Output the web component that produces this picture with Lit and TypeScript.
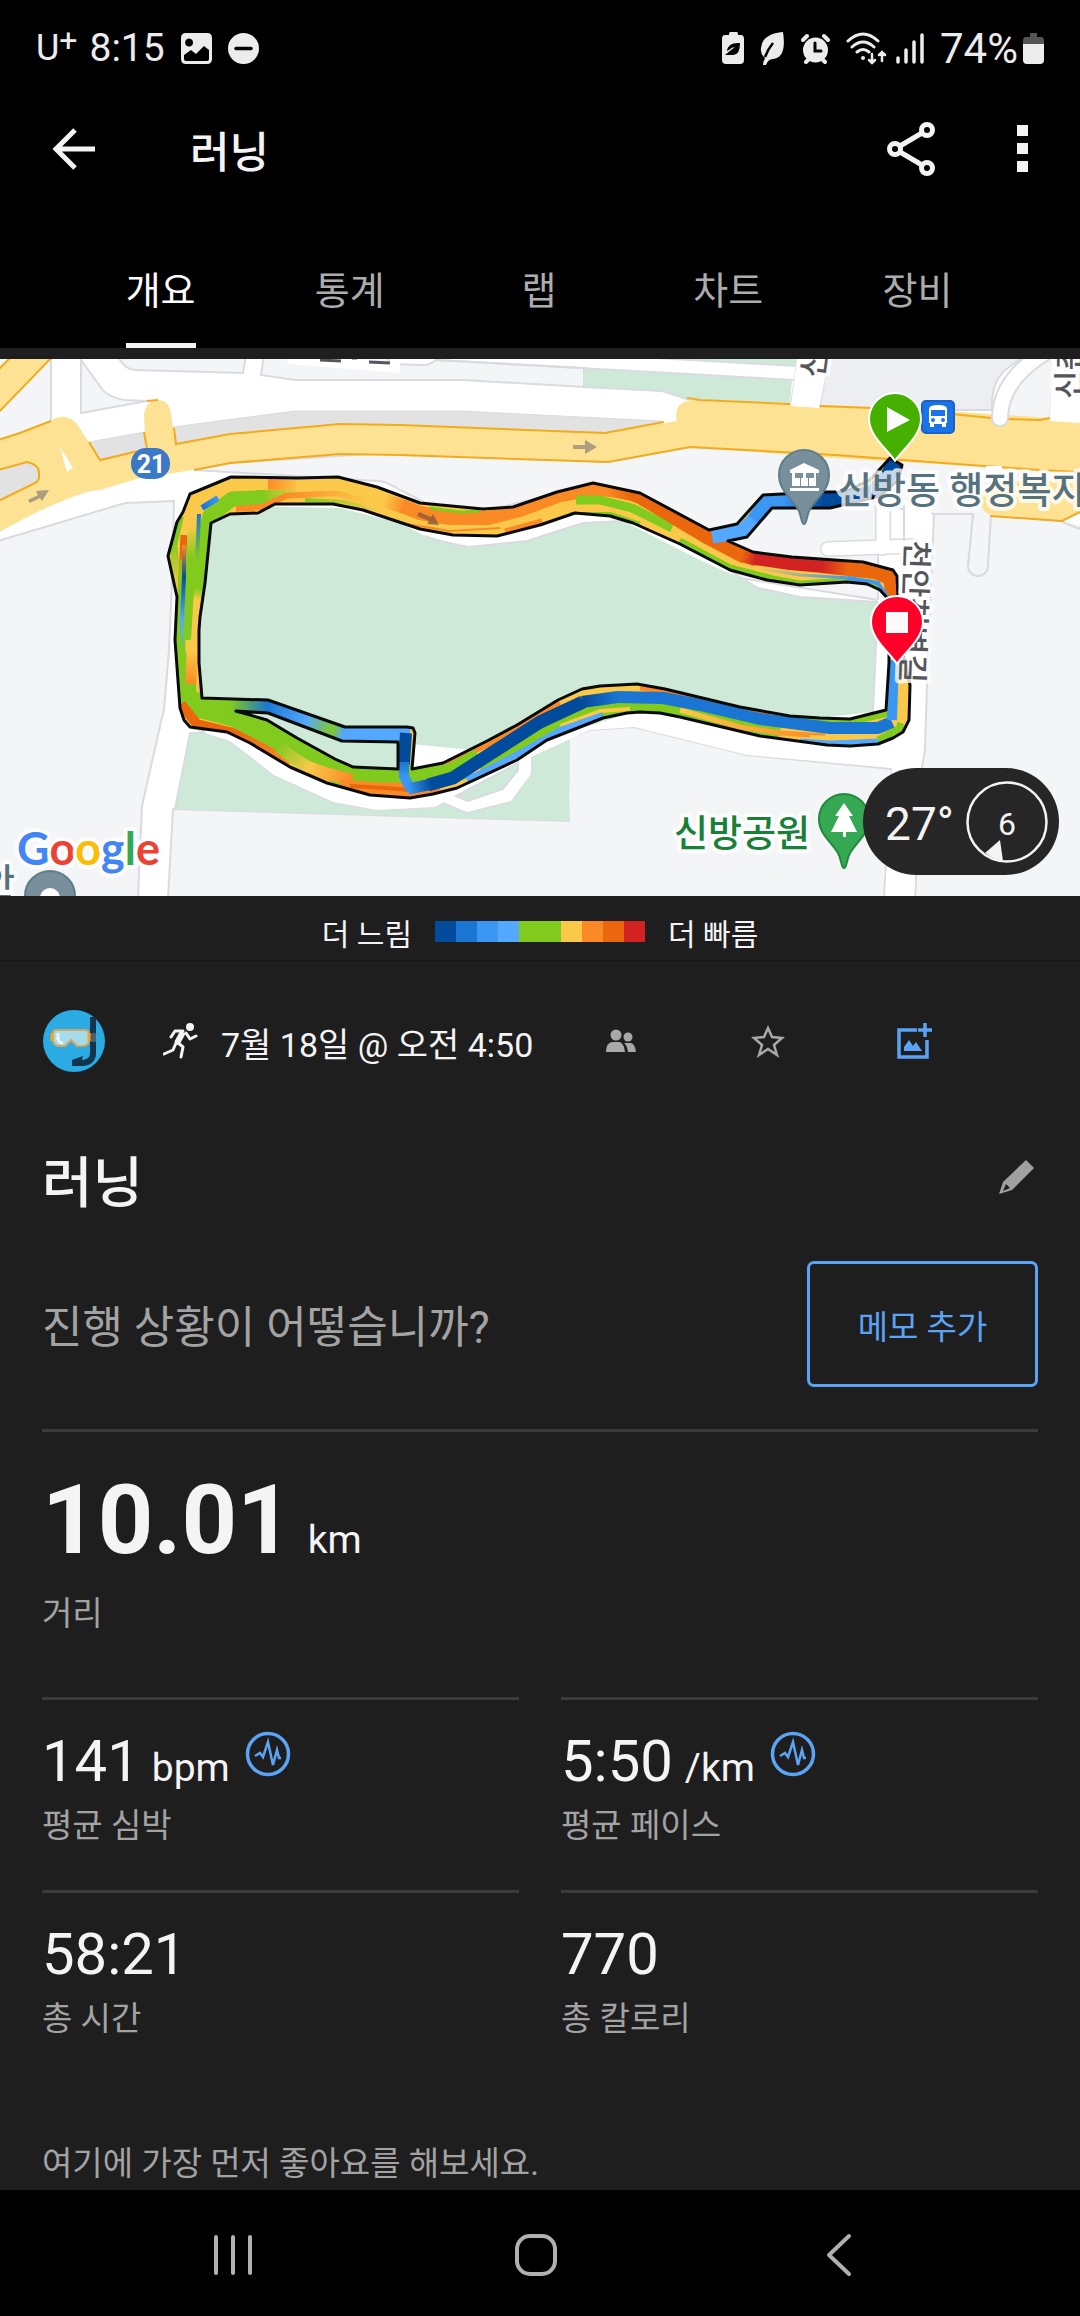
import { LitElement, html, svg, css } from "lit";
import { customElement, property, state } from "lit/decorators.js";

type Trace = { color: string; to?: string; width: number; points: string };

const DEEP = "#024a9c";
const BLUE = "#1a76d2";
const AZURE = "#3c97f2";
const SKY = "#55a8ff";
const GREEN = "#81ca1e";
const YELLOW = "#fac94a";
const ORANGE = "#fa8a26";
const RUST = "#ea670e";
const RED = "#d32222";

const PACE_SCALE = [DEEP, BLUE, AZURE, SKY, GREEN, GREEN, YELLOW, ORANGE, RUST, RED];

/* Outline of the run: outer edge, inner edge and the gap beside the shortcut. */
const RUN_SHAPE = `M183 512 190 494 231 477 298 478 338 477 377 487 420 503 483 509 513 507 557 492 593 483 640 493 709 530
 737 524 763 495 820 492 845 492 870 480 890 458 902 465 898 480 880 496 830 508 772 508 747 537 728 541
 753 552 792 557 863 562 893 570 897 576 900 640 910 685 909 720 903 732 893 738 878 744 850 746 827 745 760 736 680 717
 660 713 640 712 627 713 603 718 547 740 517 760 457 788 433 794 410 798 370 795 327 783 290 767 250 743 227 732 190 727
 184 720 180 708 175 640 177 597 168 556 177 522Z
 M211 523 230 514 258 513 275 504 333 504 363 510 420 529 453 535 497 536 540 525 575 513 610 516 633 523 680 544 730 570
 767 580 800 585 847 582 867 584 880 590 889 600 889 663 886 710 850 719 820 718 790 716 740 707 665 689 637 684 600 686
 582 689 558 700 517 725 487 741 443 763 412 769 415 733 413 728 407 727 345 727 268 700 202 698 199 663 199 630 200 617 205 583Z
 M236 711 268 713 342 741 398 742 398 769 353 767 335 759 297 738 267 720Z`;

const TRACES: Trace[] = [
  { color: GREEN, width: 10, points: "179 516 172 545" },
  { color: GREEN, to: YELLOW, width: 8, points: "173 542 178 590" },
  { color: RUST, width: 7, points: "184 535 181 600 177 640 180 700 184 714" },
  { color: GREEN, width: 20, points: "206 705 187 700 184 650 187 600 190 560" },
  { color: GREEN, width: 26, points: "196 704 235 714 285 742 340 772 400 778 430 776 470 764" },
  { color: RUST, width: 10, points: "181 704 197 724 230 732 250 742" },
  { color: RUST, to: ORANGE, width: 10, points: "232 733 260 747 290 763" },
  { color: GREEN, to: YELLOW, width: 12, points: "278 746 292 757 310 768" },
  { color: YELLOW, to: ORANGE, width: 12, points: "308 767 325 773 352 780" },
  { color: ORANGE, width: 16, points: "340 787 370 790 410 791 440 788" },
  { color: RUST, width: 4, points: "350 786 385 788 410 790" },
  { color: YELLOW, to: GREEN, width: 15, points: "302 486 280 492 262 497" },
  { color: GREEN, width: 15, points: "264 496 257 498 232 499 210 516 203 540 199 592" },
  { color: GREEN, to: YELLOW, width: 13, points: "197 588 195 600" },
  { color: YELLOW, width: 13, points: "195 599 192 620 192 652" },
  { color: YELLOW, to: ORANGE, width: 11, points: "192 650 191 684" },
  { color: YELLOW, to: GREEN, width: 12, points: "194 526 192 558" },
  { color: YELLOW, width: 12, points: "194 528 194 505 202 495 232 484 300 484" },
  { color: GREEN, width: 8, points: "191 555 190 590 187 640" },
  { color: BLUE, to: GREEN, width: 4, points: "199 514 197 560" },
  { color: BLUE, to: AZURE, width: 6, points: "202 508 218 498" },
  { color: ORANGE, to: DEEP, width: 4, points: "184 545 184 578" },
  { color: DEEP, to: SKY, width: 4, points: "184 576 182 620" },
  { color: SKY, to: GREEN, width: 4, points: "182 618 182 650" },
  { color: ORANGE, to: YELLOW, width: 11, points: "268 484 300 485" },
  { color: ORANGE, width: 6, points: "236 509 262 507 286 496" },
  { color: ORANGE, to: YELLOW, width: 6, points: "284 496 335 493 368 501" },
  { color: YELLOW, width: 11, points: "296 486 340 485 378 497" },
  { color: GREEN, to: YELLOW, width: 4, points: "305 500 345 502 380 512" },
  { color: YELLOW, to: ORANGE, width: 14, points: "384 500 404 507" },
  { color: ORANGE, width: 14, points: "402 506 420 513 450 518 488 518 520 510 560 495 595 489 612 490" },
  { color: GREEN, width: 3, points: "430 508 460 512 480 511" },
  { color: ORANGE, width: 2, points: "400 523 450 531 500 528" },
  { color: ORANGE, width: 5, points: "505 531 542 521" },
  { color: GREEN, width: 9, points: "576 500 600 500 632 508 672 528" },
  { color: GREEN, width: 4, points: "570 514 610 514 640 524" },
  { color: ORANGE, to: RUST, width: 14, points: "606 489 632 494" },
  { color: RUST, width: 14, points: "630 493 640 497 705 536 745 557" },
  { color: GREEN, width: 5, points: "680 540 730 567 770 577" },
  { color: RUST, to: RED, width: 14, points: "742 555 756 559" },
  { color: RED, width: 14, points: "755 558 790 563 824 566" },
  { color: RED, to: RUST, width: 14, points: "822 566 848 569" },
  { color: RUST, width: 14, points: "847 569 875 572 890 578 894 605" },
  { color: GREEN, width: 7, points: "762 577 800 584 850 581 872 583 886 597" },
  { color: YELLOW, to: AZURE, width: 3, points: "755 568 800 575 850 578" },
  { color: AZURE, width: 4, points: "848 578 878 583 889 600" },
  { color: ORANGE, width: 6, points: "440 766 489 744 560 702" },
  { color: GREEN, width: 13, points: "412 776 450 770 478 755" },
  { color: YELLOW, width: 9, points: "560 703 585 692 637 687 650 689" },
  { color: ORANGE, to: RUST, width: 5, points: "640 688 660 691 690 697 770 716" },
  { color: GREEN, width: 16, points: "480 768 540 733 600 708 660 706 740 725 780 732" },
  { color: GREEN, width: 8, points: "790 718 850 721 890 712" },
  { color: YELLOW, width: 4, points: "560 726 600 711 630 709" },
  { color: SKY, width: 6, points: "467 780 520 753 560 730 603 715" },
  { color: YELLOW, to: ORANGE, width: 5, points: "680 710 740 727 780 733 825 736" },
  { color: YELLOW, width: 4, points: "810 737 840 738 880 736" },
  { color: SKY, width: 5, points: "800 741 830 743 880 741" },
  { color: GREEN, width: 7, points: "878 740 900 728 903 700" },
  { color: YELLOW, width: 12, points: "904 660 906 700 898 722" },
  { color: DEEP, width: 13, points: "428 785 453 778 490 754 540 722 583 702" },
  { color: DEEP, to: BLUE, width: 12, points: "582 702 618 697" },
  { color: BLUE, width: 12, points: "617 697 663 698 700 705 760 719 830 728 878 728 892 722" },
  { color: AZURE, width: 10, points: "892 720 894 660" },
  { color: GREEN, width: 14, points: "205 705 232 706" },
  { color: GREEN, to: BLUE, width: 16, points: "230 706 268 707" },
  { color: BLUE, to: SKY, width: 14, points: "266 706 308 720" },
  { color: SKY, to: GREEN, width: 14, points: "306 719 334 730" },
  { color: GREEN, to: SKY, width: 14, points: "332 729 344 734" },
  { color: SKY, width: 14, points: "342 734 410 734" },
  { color: DEEP, width: 12, points: "406 733 404 764" },
  { color: BLUE, to: AZURE, width: 10, points: "404 762 404 778" },
  { color: AZURE, width: 10, points: "404 776 411 790" },
  { color: AZURE, to: DEEP, width: 11, points: "408 789 432 784" },
  { color: SKY, width: 15, points: "712 536 743 531 756 518" },
  { color: AZURE, width: 15, points: "754 520 768 501 785 500" },
  { color: AZURE, to: DEEP, width: 16, points: "783 500 824 500" },
  { color: DEEP, width: 16, points: "822 500 838 500 872 494 888 476 896 462" },
];

const endsOf = (points: string) => {
  const n = points.split(" ").map(Number);
  return { x1: n[0], y1: n[1], x2: n[n.length - 2], y2: n[n.length - 1] };
};

@customElement("activity-map")
export class ActivityMap extends LitElement {
  static styles = css`
    :host {
      display: block;
      position: relative;
      overflow: hidden;
      background: #f3f5f7;
    }
    .canvas {
      display: block;
      width: 100%;
      height: auto;
    }
    .land { fill: #f3f5f7; stroke: #d9dbe0; stroke-width: 2; }
    .block { fill: #edeef2; stroke: #d9dbe0; stroke-width: 2; }
    .park { fill: #cfe9d8; }
    .edged-park { fill: #cfe9d8; stroke: #d9dbe0; stroke-width: 2; }
    .verge { fill: #e2e2e2; stroke: #d9dbe0; stroke-width: 1; }
    .road { fill: #fff; }
    .kerb { fill: none; stroke: #d9dbe0; stroke-width: 2; stroke-linejoin: round; }
    .highway { fill: #fde293; }
    .edge { fill: none; stroke: #f2ab1d; stroke-width: 2; }
    .island { fill: #e2e2e2; stroke: #f2ab1d; stroke-width: 2; }
    .lane { fill: none; stroke: #fff; stroke-linecap: round; }
    .lane-edge { fill: none; stroke: #d9dbe0; stroke-linecap: round; }
    .label {
      font-family: Roboto, "Noto Sans CJK KR", sans-serif;
      font-weight: 500;
      stroke: #fff;
      stroke-width: 8;
      stroke-linejoin: round;
      stroke-opacity: 0.8;
      paint-order: stroke;
    }
    .place { font-size: 37px; fill: #56727e; }
    .green { font-size: 37px; fill: #188038; }
    .street { font-size: 31px; fill: #54565b; }
    .shield { font-family: Roboto, sans-serif; font-weight: 700; font-size: 25px; fill: #fff; }
    .brand { font-family: Lato, sans-serif; font-size: 45px; font-weight: 700; stroke-width: 8; }
    .weather {
      position: absolute;
      right: 21px;
      bottom: 21px;
      display: flex;
      align-items: center;
      gap: 11px;
      height: 107px;
      padding: 0 10px 0 22px;
      box-sizing: border-box;
      border-radius: 54px;
      background: #262626;
      color: #f4f4f4;
      font-family: Roboto, sans-serif;
      font-size: 46px;
      line-height: 54px;
    }
    .degrees { padding-top: 4px; }
    .wind { display: block; width: 84px; height: 84px; }
    .wind text { font-family: Roboto, sans-serif; font-size: 32px; fill: #f4f4f4; }
  `;

  render() {
    return html`
      <svg class="canvas" viewBox="0 359 1080 537" role="img" aria-label="러닝 경로 지도">
        <defs>
          <clipPath id="run"><path clip-rule="evenodd" d=${RUN_SHAPE} /></clipPath>
          ${TRACES.map((t, i) => {
            if (!t.to) return "";
            const e = endsOf(t.points);
            return svg`<linearGradient id="pace-${i}" gradientUnits="userSpaceOnUse" x1=${e.x1} y1=${e.y1} x2=${e.x2} y2=${e.y2}>
              <stop offset="0" stop-color=${t.color} /><stop offset="1" stop-color=${t.to} />
            </linearGradient>`;
          })}
        </defs>
        ${this.ground()} ${this.route()} ${this.labels()} ${this.pins()}
      </svg>
      <div class="weather">
        <span class="degrees">27°</span>
        <svg class="wind" viewBox="0 0 84 84" aria-hidden="true">
          <circle cx="42" cy="42" r="39.500" fill="none" stroke="#f4f4f4" stroke-width="2.500" />
          <path d="M35 60 20 73Q28 79 38 81Z" fill="#f4f4f4" />
          <text x="42" y="55" text-anchor="middle">6</text>
        </svg>
      </div>
    `;
  }

  private ground() {
    return svg`
      <rect class="road" y="359" width="1080" height="537" />
      <path class="land" d="M-2 355H51V421L-2 441Z" />
      <path class="highway" d="M-2 368 10 357H52L-2 413Z" />
      <path class="edge" d="M-2 370 12 356M-2 413 54 355" />
      <path class="land" d="M81 360 102 389Q108 397 124 400L147 401 81 413Z" />
      <path class="land" d="M118 357Q126 370 135 370L243 373 246 355Z" />
      <path class="land" d="M264 355 261 375 295 380H464L584 387V368L436 360Q428 366 422 365L390 364 386 355Z" />
      <path class="park" d="M584 368 792 380 790 403 690 399 662 391 584 387Z" />
      <path class="kerb" d="M436 360 795 380M584 387 662 391 690 400" />
      <path class="park" d="M662 358 797 366V357Z" />
      <path class="kerb" d="M655 358 797 366" />
      <path class="block" d="M829 356 819 410H992V400Q994 378 1008 368L1024 356Z" />
      <path class="land" d="M1054 356 1050 425H1007V410Q1008 392 1022 380L1050 356Z" />
      <path class="kerb" d="M798 357 791 405" />
      <path class="verge" d="M89 442 145 432V455L98 465ZM173 427 295 411H460L662 421 605 434 400 427 340 424 230 436 176 446Z" />
      <path class="land" d="M194 470 230 463 400 452 608 462 690 447 835 455 1080 470V530L1060 521 1000 516H991L988 567A10 10 0 0 1 968 565L973 514H934L878 505 878 600 740 578 640 500 593 485 480 512 430 505 400 490Q386 481 378 481Z" />
      <path class="highway" d="M-2 440 20 433 50 421Q68 410 79 427L100 460 146 448 144 415Q146 400 158 400 170 401 171 415L176 444 230 434 340 424 400 425 605 433 677 421Q672 400 697 400L900 408 1080 420V473L1040 470 835 458 690 447 608 462 400 455 340 454 230 463 180 472 140 478 100 490 90 491Q50 503-2 533Z" />
      <path class="edge" d="M-2 440 20 433 51 421M89 442 100 460 147 449 144 432M147 401 158 400M174 428 176 444 230 434 340 424 400 425 605 433 664 422M687 398 700 400 790 404M819 406 900 409 992 418M1007 419 1040 420 1050 418M194 470 230 463 340 454 400 455 608 462 690 447 835 455 1040 470 1080 472" />
      <path class="island" d="M-2 470 27 462Q40 465 39 474V478Q38 482 33 484L-2 501Z" />
      <path class="road" d="M60 447 73 468 67 472Z" />
      <path class="road" d="M797 359H829L819 408 791 406ZM992 412H1007V419H992ZM1052 359H1080V423L1050 421Z" />
      <path class="lane-edge" stroke-width="18" d="M1046 352Q1000 380 1000 418" />
      <path class="lane" stroke-width="14" d="M1046 352Q1000 380 1000 418" />
      <path class="land" d="M-2 541 125 503 174 501 172 580 169 650 164 710 161 722 142 806 138 898H-2Z" />
      <path class="park" d="M200 505 340 508 400 523 425 536 468 547 527 541 583 523 623 521 700 560 740 578 758 588 800 597 878 602 873 712 800 720 640 712 540 740 440 794 350 790 190 728Z" />
      <path class="kerb" d="M425 536 436 540 468 547 527 541 583 523 623 521M730 571 758 588 800 597 878 602 873 712" />
      <path class="land" d="M565 740 590 730 634 727 747 755 892 769 884 898H168L173 809 569 821Z" />
      <path class="park" d="M190 733 205 733 230 741 274 775 333 802 377 810 435 807 443 802 467 813 511 801 531 774V756L570 737 569 821 175 809Z" />
      <path class="kerb" d="M175 809 190 733H205L230 741 274 775 333 802 377 810 435 807 443 802 467 813 511 801 531 774V756L565 739" />
      <path class="road" d="M205 723 520 755 560 735 640 710 880 740 892 768 747 755 634 727 590 730 531 757 444 802 435 807 377 810 333 802 274 775 230 741 205 733Z" />
      <path class="road" d="M443 802 531 755V774L511 801 467 812Z" />
      <path class="park" d="M236 709 268 700 410 730V772L300 765Z" />
      <path class="edged-park" d="M456 796 468 801 503 789 518 770V763Z" />
      <path class="road" d="M878 600H912V740H880Z" />
      <path class="land" d="M1082 530 1060 521 1000 516H991L988 567A10 10 0 0 1 968 565L973 514H934L928 650 925 750 922 767 915 898H1082Z" />
      <path class="road" d="M904 500H932L914 898H885L892 768Z" />
      <path class="lane-edge" stroke-width="16" d="M828 549 912 546M883 500V548" />
      <path class="lane" stroke-width="13" d="M828 549 912 546M883 500V548" />
      <path class="kerb" d="M904 505V541" />
      <path class="highway" d="M1080 478 1000 482Q980 486 980 502 982 516 1000 516L1060 521 1080 513Z" />
      <path class="edge" d="M990 516 1062 521 1080 512" />
      <path class="road" d="M986 466H1002V482H986ZM1068 521 1080 514V526Z" />
      <path d="M28 500 38 495 36 491 49 490 42 501 40 498 30 503ZM573 445H585V440L597 447 585 454V449H573Z" fill="#ac9e7e" />
      <path d="M288 359 400 368" stroke="#fff" stroke-width="10" fill="none" />
      <path d="M320 360 341 361M352 358H357M369 362 390 363" stroke="#54565b" stroke-width="3" fill="none" />
    `;
  }

  private route() {
    return svg`
      <path d=${RUN_SHAPE} fill=${YELLOW} fill-rule="evenodd" />
      <g clip-path="url(#run)" fill="none" stroke-linejoin="round">
        ${TRACES.map(
          (t, i) => svg`<polyline points=${t.points} stroke=${t.to ? `url(#pace-${i})` : t.color} stroke-width=${t.width} />`
        )}
      </g>
      <path d=${RUN_SHAPE} fill="none" stroke="#0a0a0a" stroke-width="3" stroke-linejoin="round" />
      <path d="M419 512 431 517 433 514 439 525 427 524 429 521 417 516Z" fill="#8a5a34" opacity=".8" />
    `;
  }

  private labels() {
    return svg`
      <text class="label place" x="838" y="504">신방동 행정복지</text>
      <text class="label street" transform="translate(906 540) rotate(92)">천안천변길</text>
      <text class="label street" transform="translate(823 379) rotate(-82)">신</text>
      <text class="label street" transform="translate(1080 399) rotate(-90)">신촌</text>
      <text class="label green" x="674" y="847">신방공원</text>
      <text class="label place" x="-19" y="896">안</text>
      <rect x="131" y="448" width="39" height="31" rx="15" fill="#3b78c7" />
      <text class="shield" x="151" y="473" text-anchor="middle">21</text>
      <text class="label brand" x="17" y="865"><tspan fill="#4285f4">G</tspan><tspan fill="#ea4335">o</tspan><tspan fill="#fbbc05">o</tspan><tspan fill="#4285f4">g</tspan><tspan fill="#34a853">l</tspan><tspan fill="#ea4335">e</tspan></text>
    `;
  }

  private pins() {
    return svg`
      <g fill="#78909c" stroke="#5f7d8a" stroke-width="2">
        <path d="M804 524C801 524 802 516 798 509 790 496 779 490 779 475A25 25 0 0 1 829 475C829 490 818 496 810 509 806 516 807 524 804 524Z" />
        <circle cx="50" cy="896" r="25" />
      </g>
      <circle cx="50" cy="898" r="10" fill="#fff" />
      <path d="M804 463 819 470V473H816V486H792V473H790V470ZM790 488H819V491H790Z" fill="#fff" />
      <path d="M795 473H803V478H801V486H800V478H795ZM806 473H814V478H809V486H808V478H806Z" fill="#78909c" />
      <path d="M844 868C841 868 842 860 838 853 830 840 819 834 819 819A25 25 0 0 1 869 819C869 834 858 840 850 853 846 860 847 868 844 868Z" fill="#34a853" stroke="#24893f" stroke-width="2" />
      <path d="M844 803 853 816H849L857 832H846V837H843V832H831L839 816H835Z" fill="#fff" />
      <rect x="922" y="401" width="32" height="32" rx="4" fill="#1a73e8" stroke="#1b62c4" stroke-width="2" />
      <path d="M929 409Q929 405 938 405 947 405 947 409V423H946V427H942V424H934V427H930V423H929ZM931 410V416H945V410ZM933 418A2 2 0 1 0 933 422 2 2 0 0 0 933 418ZM943 418A2 2 0 1 0 943 422 2 2 0 0 0 943 418Z" fill="#fff" fill-rule="evenodd" />
      <g stroke="#fff" stroke-width="2" stroke-linejoin="round">
        <path d="M895 461C888 450 869 436 869 419A26 26 0 0 1 921 419C921 436 902 450 895 461Z" fill="#45b000" />
        <path d="M897 664C890 653 871 639 871 622A26 26 0 0 1 923 622C923 639 904 653 897 664Z" fill="#ff0029" />
      </g>
      <path d="M887 407V432L910 420ZM886 612H908V633H886Z" fill="#fafafa" />
    `;
  }
}

@customElement("metric-tile")
export class MetricTile extends LitElement {
  @property() value = "";
  @property() unit = "";
  @property() label = "";
  @property({ type: Boolean }) chart = false;
  @property({ type: Boolean, reflect: true }) lead = false;

  static styles = css`
    :host {
      display: flex;
      flex-direction: column;
      box-sizing: border-box;
      min-height: 193px;
      padding-top: 26px;
      border-top: 3px solid #3b3b3b;
    }
    :host([lead]) {
      min-height: 268px;
      padding-top: 30px;
    }
    .reading {
      display: flex;
      align-items: baseline;
      gap: 12px;
      color: #f4f4f4;
      font-size: 58px;
      line-height: 70px;
    }
    :host([lead]) .reading {
      gap: 15px;
      font-size: 97px;
      font-weight: 700;
      line-height: 116px;
    }
    .unit { font-size: 39px; font-weight: 400; line-height: 40px; }
    .caption {
      color: #a3a3a3;
      font-size: 33px;
      line-height: 48px;
      margin-top: 6px;
    }
    :host([lead]) .caption { margin-top: 12px; }
    .pulse {
      align-self: flex-start;
      width: 46px;
      height: 46px;
      padding: 0;
      border: 0;
      background: none;
      line-height: 0;
      margin: 5px 0 0 3px;
    }
    .pulse svg { width: 46px; height: 46px; }
  `;

  render() {
    return html`
      <div class="reading">
        <span>${this.value}</span>
        ${this.unit ? html`<span class="unit">${this.unit}</span>` : ""}
        ${this.chart
          ? html`<button class="pulse" aria-label="${this.label} 차트">
              <svg viewBox="0 0 46 46" fill="none" stroke="#5ba4f5">
                <circle cx="23" cy="23" r="20.500" stroke-width="3.500" />
                <path d="M10 25 15 22 18 26 23 11 28 34 32 19 34 27H36" stroke-width="2.500" />
              </svg>
            </button>`
          : ""}
      </div>
      <div class="caption">${this.label}</div>
    `;
  }
}

@customElement("app-root")
export class AppRoot extends LitElement {
  @state() private tab = 0;
  private readonly tabs = ["개요", "통계", "랩", "차트", "장비"];

  static styles = css`
    :host {
      display: flex;
      flex-direction: column;
      min-height: 100vh;
      background: #000;
      color: #f4f4f4;
      font-family: Roboto, "Noto Sans CJK KR", sans-serif;
    }
    button {
      padding: 0;
      border: 0;
      background: none;
      color: inherit;
      font: inherit;
      cursor: pointer;
    }
    svg { display: block; flex-shrink: 0; }
    .status {
      display: flex;
      align-items: center;
      justify-content: space-between;
      height: 96px;
      padding: 0 36px;
      font-size: 39px;
      color: #ececec;
    }
    .group { display: flex; align-items: center; gap: 16px; }
    .carrier { font-size: 36px; }
    .carrier sup { font-size: 32px; line-height: 0; vertical-align: 9px; }
    .clock { margin-left: -4px; }
    .signal { margin-left: -7px; }
    .charge { display: flex; align-items: center; gap: 5px; font-size: 42px; }
    .bar {
      display: flex;
      align-items: center;
      height: 105px;
      padding: 0 42px;
    }
    .bar h1 {
      flex: 1;
      margin: 0;
      padding: 8px 0 0 84px;
      font-size: 43px;
      font-weight: 500;
      line-height: 60px;
    }
    .back { padding: 0 10px; }
    .share { margin-right: 72px; }
    .more { padding: 0 10px; }
    .tabs {
      display: grid;
      grid-template-columns: repeat(5, 1fr);
      height: 147px;
      padding: 0 68px 0 66px;
      font-size: 38px;
      color: #acacac;
    }
    .tab {
      display: flex;
      justify-content: center;
      align-items: flex-end;
      line-height: 60px;
    }
    .tab span { padding-bottom: 22px; border-bottom: 5px solid transparent; }
    .tab.active { color: #fff; }
    .tab.active span { border-color: #f4f4f4; }
    main { flex: 1; padding-top: 11px; background: #1e1e1e; }
    .legend {
      display: flex;
      align-items: center;
      justify-content: center;
      gap: 23px;
      height: 56px;
      padding-top: 8px;
      border-bottom: 1px solid #171717;
      font-size: 30px;
    }
    .scale { display: flex; }
    .swatch { width: 21px; height: 21px; margin-top: -2px; }
    .meta {
      display: flex;
      align-items: center;
      height: 159px;
      padding: 0 92px 0 43px;
      font-size: 34px;
    }
    .runner { margin: 0 22px 0 58px; }
    .when { flex: 1; padding-top: 3px; white-space: nowrap; }
    .action { display: grid; place-items: center; width: 147px; height: 96px; }
    .body { padding: 0 42px; }
    .heading {
      display: flex;
      align-items: center;
      justify-content: space-between;
      height: 126px;
    }
    .heading h2 { margin: 0; font-size: 55px; font-weight: 500; line-height: 80px; }
    .edit { padding: 0 2px 12px 0; }
    .note {
      display: flex;
      align-items: center;
      justify-content: space-between;
      padding: 15px 0 42px;
      font-size: 44px;
      color: #a3a3a3;
    }
    .add {
      width: 231px;
      height: 126px;
      padding-top: 2px;
      box-sizing: border-box;
      border: 3px solid #5ba4f5;
      border-radius: 7px;
      color: #5ba4f5;
      font-size: 33px;
    }
    .metrics { display: grid; grid-template-columns: 1fr 1fr; column-gap: 42px; }
    .lead { grid-column: 1 / -1; }
    .like {
      margin: 0;
      padding: 57px 0 0;
      color: #a3a3a3;
      font-size: 33px;
      line-height: 48px;
    }
    .nav {
      display: flex;
      align-items: center;
      height: 126px;
      padding: 4px 90px 0 82px;
      box-sizing: border-box;
    }
    .nav button { display: grid; place-items: center; flex: 1; height: 100px; }
  `;

  render() {
    return html`
      ${this.statusBar()}
      <header class="bar">
        <button class="back" aria-label="뒤로">
          <svg width="44" height="42" viewBox="0 0 44 42" fill="none" stroke="#f4f4f4" stroke-width="5">
            <path d="M23 2 4 21 23 40M4 21H43" />
          </svg>
        </button>
        <h1>러닝</h1>
        <button class="share" aria-label="공유">
          <svg width="48" height="54" viewBox="0 0 48 54" fill="none" stroke="#f4f4f4" stroke-width="5">
            <circle cx="8" cy="27" r="5.500" /><circle cx="40" cy="8" r="5.500" /><circle cx="40" cy="46" r="5.500" />
            <path d="M13 24 35 11M13 30 35 43" />
          </svg>
        </button>
        <button class="more" aria-label="더보기">
          <svg width="11" height="48" viewBox="0 0 11 48" fill="#f4f4f4">
            <path d="M0 0H11V11H0ZM0 18H11V29H0ZM0 36H11V47H0Z" />
          </svg>
        </button>
      </header>
      <nav class="tabs" role="tablist">
        ${this.tabs.map(
          (name, i) => html`<button
            class="tab ${i === this.tab ? "active" : ""}"
            role="tab"
            aria-selected=${i === this.tab ? "true" : "false"}
            @click=${() => (this.tab = i)}
          ><span>${name}</span></button>`
        )}
      </nav>
      <main>
        <activity-map></activity-map>
        <div class="legend">
          <span>더 느림</span>
          <div class="scale">
            ${PACE_SCALE.map((c) => html`<div class="swatch" style="background:${c}"></div>`)}
          </div>
          <span>더 빠름</span>
        </div>
        ${this.meta()}
        <div class="body">
          <div class="heading">
            <h2>러닝</h2>
            <button class="edit" aria-label="이름 편집">
              <svg width="38" height="36" viewBox="0 0 38 36" fill="#a0a0a0">
                <path fill-rule="evenodd" d="M28 1 36 9 14 31 1 35 5 23ZM8 25 5 32 12 29Z" />
              </svg>
            </button>
          </div>
          <div class="note">
            <span>진행 상황이 어떻습니까?</span>
            <button class="add">메모 추가</button>
          </div>
          <div class="metrics">
            <metric-tile class="lead" lead value="10.01" unit="km" label="거리"></metric-tile>
            <metric-tile value="141" unit="bpm" label="평균 심박" chart></metric-tile>
            <metric-tile value="5:50" unit="/km" label="평균 페이스" chart></metric-tile>
            <metric-tile value="58:21" label="총 시간"></metric-tile>
            <metric-tile value="770" label="총 칼로리"></metric-tile>
          </div>
          <p class="like">여기에 가장 먼저 좋아요를 해보세요.</p>
        </div>
      </main>
      <footer class="nav">
        <button aria-label="최근 앱">
          <svg width="40" height="42" viewBox="0 0 40 42" stroke="#b0b0b0" stroke-width="4" stroke-linecap="round">
            <path d="M3 3V39M20 3V39M37 3V39" />
          </svg>
        </button>
        <button aria-label="홈">
          <svg width="42" height="42" viewBox="0 0 42 42" fill="none" stroke="#b0b0b0" stroke-width="4">
            <rect x="2" y="2" width="38" height="38" rx="13" />
          </svg>
        </button>
        <button aria-label="이전">
          <svg width="26" height="44" viewBox="0 0 26 44" fill="none" stroke="#b0b0b0" stroke-width="4" stroke-linecap="round" stroke-linejoin="round">
            <path d="M23 3 3 22 23 41" />
          </svg>
        </button>
      </footer>
    `;
  }

  private statusBar() {
    return html`
      <div class="status">
        <div class="group">
          <span class="carrier">U<sup>+</sup></span>
          <span class="clock">8:15</span>
          <svg width="31" height="31" viewBox="0 0 31 31" fill="#ececec">
            <path fill-rule="evenodd" d="M5 0H26Q31 0 31 5V26Q31 31 26 31H5Q0 31 0 26V5Q0 0 5 0ZM10 6A4 4 0 1 0 10 13 4 4 0 0 0 10 6ZM3 22V26Q3 28 5 28H26Q28 28 28 26V17L23 13 15 21 10 17Z" />
          </svg>
          <svg width="31" height="31" viewBox="0 0 31 31">
            <circle cx="15.500" cy="15.500" r="15.500" fill="#ececec" />
            <path d="M8 15.500H23" stroke="#000" stroke-width="3.500" stroke-linecap="round" />
          </svg>
        </div>
        <div class="group">
          <svg width="22" height="32" viewBox="0 0 22 32" fill="#ececec">
            <path fill-rule="evenodd" d="M8 0H15Q16 0 16 3H19Q22 3 22 7V28Q22 32 18 32H4Q0 32 0 28V7Q0 3 3 3H7Q7 0 8 0ZM18 11Q6 10 5 19L7 18Q10 15 13 15 9 18 3 23H10Q18 24 18 11Z" />
          </svg>
          <svg width="25" height="33" viewBox="0 0 25 33">
            <path d="M23 0Q27 26 13 27 8 27 6 33H3Q3 30 5 26 0 22 1 16 2 2 23 0Z" fill="#ececec" />
            <path d="M5 25Q8 17 13 11" stroke="#000" stroke-width="2.500" fill="none" />
          </svg>
          <svg width="29" height="31" viewBox="0 0 29 31" stroke-linecap="round">
            <circle cx="14.500" cy="17" r="12.500" fill="#ececec" />
            <path d="M2 7 6 3M27 7 23 3M5 29 8 26M24 29 21 26" stroke="#ececec" stroke-width="4" />
            <path d="M14 10V18H20" fill="none" stroke="#000" stroke-width="3" />
          </svg>
          <svg width="41" height="33" viewBox="0 0 41 33" fill="none" stroke="#ececec" stroke-width="3" stroke-linecap="round">
            <path d="M2 9Q17-5 32 9M6 15Q17 5 28 15M11 20Q17 15 23 20" />
            <circle cx="17" cy="26" r="2" fill="#ececec" stroke="none" />
            <path d="M26 22V31M23 28 26 31 29 28M36 29V20M33 23 36 20 39 23" stroke-width="2.500" />
          </svg>
          <svg class="signal" width="28" height="31" viewBox="0 0 28 31" stroke="#ececec" stroke-width="3.500" stroke-linecap="round">
            <path d="M2 25V29M10 17V29M18 9V29M26 2V29" />
          </svg>
          <div class="charge">
            <span>74%</span>
            <svg width="21" height="31" viewBox="0 0 21 31">
              <path d="M7 0H14V4H18Q21 4 21 8V11H0V8Q0 4 3 4H7Z" fill="#555" />
              <path d="M0 11H21V27Q21 31 17 31H4Q0 31 0 27Z" fill="#ececec" />
            </svg>
          </div>
        </div>
      </div>
    `;
  }

  private meta() {
    return html`
      <div class="meta">
        <svg width="62" height="62" viewBox="0 0 62 62" aria-hidden="true">
          <circle cx="31" cy="31" r="31" fill="#2aabe4" />
          <path d="M50 7V43Q50 52 40 53H31" fill="none" stroke="#12344d" stroke-width="6" />
          <path d="M29 50V56H37L40 46Z" fill="#12344d" />
          <path d="M44 23H53V32H44Z" fill="#4e5d66" />
          <path d="M13 20H42Q46 20 46 25V30Q46 36 40 36H34L28 30 22 36H17Q10 36 10 29V24Q10 20 13 20Z" fill="#a5dcec" stroke="#d9a45c" stroke-width="2" />
          <path d="M15 23V29Q16 33 20 33" fill="none" stroke="#e8f7fb" stroke-width="3" />
          <path d="M9 23V31M46 23V31" stroke="#f5a623" stroke-width="3" />
        </svg>
        <svg class="runner" width="36" height="36" viewBox="0 0 36 36" fill="none" stroke="#f4f4f4" aria-hidden="true">
          <circle cx="27" cy="4" r="4" fill="#f4f4f4" stroke="none" />
          <path d="M20 9 14 20" stroke-width="6" />
          <path d="M20 8 12 8 8 14M23 10 27 16 33 13M14 19 20 24 18 34M13 20 10 27 1 31" stroke-width="3" stroke-linejoin="round" stroke-linecap="round" />
        </svg>
        <span class="when">7월 18일 @ 오전 4:50</span>
        <button class="action" aria-label="공개 범위">
          <svg width="30" height="24" viewBox="0 0 30 24" fill="#a8a8a8">
            <circle cx="10" cy="6" r="5.500" /><circle cx="22" cy="8" r="4.500" />
            <path d="M0 23Q0 14 6 13H14Q18 15 19 23ZM18 14H25Q29 15 30 23H22Q21 16 18 14Z" />
          </svg>
        </button>
        <button class="action" aria-label="즐겨찾기">
          <svg width="34" height="34" viewBox="0 0 34 34" fill="none" stroke="#a8a8a8" stroke-width="2.500">
            <path d="M17 4 21 13 31 14 23 21 26 31 17 25 8 31 11 21 3 14 13 13Z" />
          </svg>
        </button>
        <button class="action" aria-label="사진 추가">
          <svg width="36" height="38" viewBox="0 0 36 38" fill="none" stroke="#5ba4f5">
            <path d="M20 8H2V35H30V18" stroke-width="3.500" />
            <path d="M28 1V15M21 8H35" stroke-width="3.500" />
            <path d="M7 29V25L12 18 16 24 19 20 25 29Z" fill="#5ba4f5" stroke="none" />
          </svg>
        </button>
      </div>
    `;
  }
}
